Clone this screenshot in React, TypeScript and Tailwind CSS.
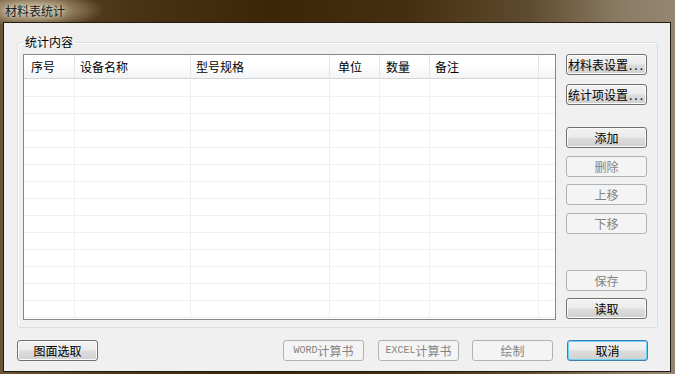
const FONT = "font-['Noto_Sans_CJK_SC','Noto_Sans',sans-serif]";

const columns = [
  { label: "序号", cls: "w-[51px] pl-[7px] border-r" },
  { label: "设备名称", cls: "w-[116px] pl-[5px] border-r" },
  { label: "型号规格", cls: "w-[139px] pl-[5px] border-r" },
  { label: "单位", cls: "w-[50px] pl-[8px] border-r" },
  { label: "数量", cls: "w-[50px] pl-[6px] border-r" },
  { label: "备注", cls: "w-[109px] pl-[5px] border-r" },
  { label: "", cls: "w-[16px]" },
];

const rows = Array.from({ length: 14 }, (_, i) => i);

function Btn({
  children,
  disabled,
  primary,
  className = "",
}: {
  children: React.ReactNode;
  disabled?: boolean;
  primary?: boolean;
  className?: string;
}) {
  let look =
    "border-[#707070] text-black bg-[linear-gradient(180deg,#f2f2f2_0%,#ebebeb_48%,#dddddd_52%,#cfcfcf_100%)] shadow-[inset_0_0_0_1px_#fbfbfb]";
  if (disabled) look = "border-[#adb2b5] text-[#838383] bg-[#f4f4f4]";
  if (primary)
    look =
      "border-[#3c7fb1] text-black bg-[linear-gradient(180deg,#f4f4f4_0%,#ececec_48%,#dcdcdc_52%,#d0d0d0_100%)] shadow-[inset_0_0_0_1px_#6fd3f8]";
  return (
    <button
      className={`h-[21px] w-[81px] shrink-0 flex items-center justify-center rounded-[3px] border text-[12px] leading-none whitespace-nowrap ${look} ${className}`}
    >
      {children}
    </button>
  );
}

function Latin({ children }: { children: React.ReactNode }) {
  return <span className="font-['Liberation_Mono',monospace] text-[10px]">{children}</span>;
}

function Dots() {
  return <span className="tracking-[2px] pl-[1px]">...</span>;
}

export default function App() {
  return (
    <div
      className={`${FONT} w-[675px] h-[374px] overflow-hidden flex flex-col pl-[3px] pr-[4px] pb-[2px] bg-[radial-gradient(ellipse_70px_18px_at_34px_10px,#cdbf9f_0%,rgba(205,191,159,0)_100%),linear-gradient(90deg,#6a5336_0%,#4c3517_18%,#3b2607_40%,#452f12_60%,#5e4a2e_78%,#8a7c64_92%,#948672_100%)]`}
    >
      {/* Title bar */}
      <div className="h-[22px] shrink-0 flex items-center pl-[2px]">
        <span className="text-[12px] leading-none text-[#14202a] [text-shadow:0_0_4px_#e6dcc4,0_0_8px_#e6dcc4]">
          材料表统计
        </span>
      </div>

      {/* Client area */}
      <div className="flex-1 flex flex-col bg-[#f0f0f0] border border-[#231a10]">
        <fieldset className="ml-[13px] mt-[13px] w-[641px] h-[292px] rounded-[3px] border border-[#d5dfe5] shadow-[inset_1px_1px_0_#ffffff] pl-[5px] pt-[6px] flex">
          <legend className="px-[2px] text-[12px] leading-[12px] text-black">统计内容</legend>
          <div className="flex items-start">
            {/* List view */}
            <div className="w-[533px] h-[266px] border border-[#828790] bg-white flex flex-col overflow-hidden">
              <div className="h-[24px] shrink-0 flex border-b border-[#d5d5d5] bg-[linear-gradient(180deg,#ffffff_0%,#ffffff_40%,#f3f4f6_100%)]">
                {columns.map((c, i) => (
                  <div
                    key={i}
                    className={`${c.cls} shrink-0 h-full flex items-center border-[#e3e5e8] text-[12px] text-black`}
                  >
                    {c.label}
                  </div>
                ))}
              </div>
              <div className="pt-[1px]">
                {rows.map((r) => (
                  <div key={r} className="h-[17px] flex border-b border-[#f0f0f0]">
                    {columns.map((c, i) => (
                      <div key={i} className={`${c.cls} shrink-0 h-full border-[#f0f0f0]`} />
                    ))}
                  </div>
                ))}
              </div>
            </div>

            {/* Side buttons */}
            <div className="ml-[10px] flex flex-col">
              <Btn>
                材料表设置<Dots />
              </Btn>
              <Btn className="mt-[9px]">
                统计项设置<Dots />
              </Btn>
              <Btn className="mt-[22px]">添加</Btn>
              <Btn className="mt-[8px]" disabled>
                删除
              </Btn>
              <Btn className="mt-[7px]" disabled>
                上移
              </Btn>
              <Btn className="mt-[8px]" disabled>
                下移
              </Btn>
              <Btn className="mt-[36px]" disabled>
                保存
              </Btn>
              <Btn className="mt-[7px]">读取</Btn>
            </div>
          </div>
        </fieldset>

        {/* Bottom buttons */}
        <div className="mt-[12px] ml-[13px] flex">
          <Btn>图面选取</Btn>
          <Btn className="ml-[185px] w-[80px]" disabled>
            <Latin>WORD</Latin>计算书
          </Btn>
          <Btn className="ml-[14px]" disabled>
            <Latin>EXCEL</Latin>计算书
          </Btn>
          <Btn className="ml-[13px]" disabled>
            绘制
          </Btn>
          <Btn className="ml-[14px]" primary>
            取消
          </Btn>
        </div>
      </div>
    </div>
  );
}
